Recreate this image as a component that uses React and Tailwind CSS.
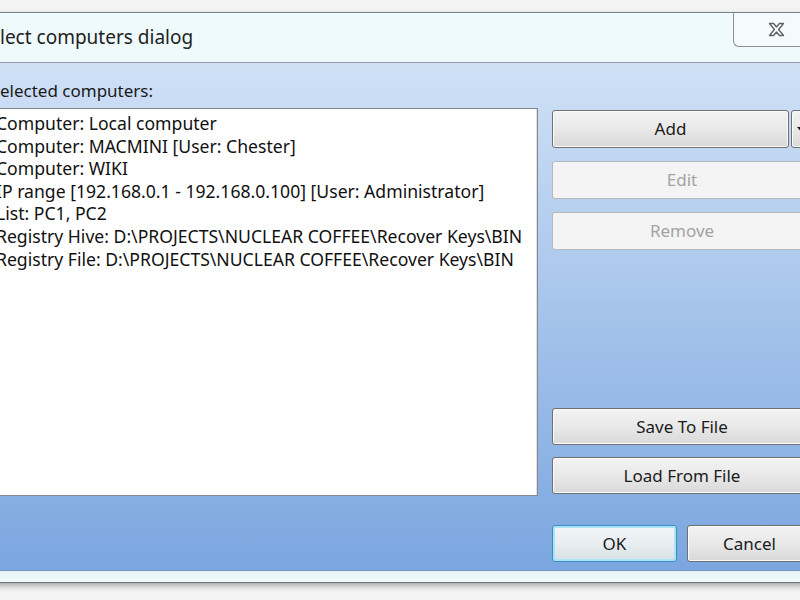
import React from "react";

const entries = [
  "Computer: Local computer",
  "Computer: MACMINI [User: Chester]",
  "Computer: WIKI",
  "IP range [192.168.0.1 - 192.168.0.100] [User: Administrator]",
  "List: PC1, PC2",
  "Registry Hive: D:\\PROJECTS\\NUCLEAR COFFEE\\Recover Keys\\BIN",
  "Registry File: D:\\PROJECTS\\NUCLEAR COFFEE\\Recover Keys\\BIN",
];

function WinButton({ children, disabled, focused, className = "" }) {
  let look =
    "border-[#707070] bg-gradient-to-b from-[#f3f3f3] via-[#e9e9e9] to-[#d9d9d9] text-[#1b1b1b] shadow-[inset_0_0_0_1px_#fbfbfb]";
  if (disabled) {
    look = "border-[#b5b9bc] bg-[#f4f4f4] text-[#a3a3a3]";
  }
  if (focused) {
    look =
      "border-[#3c8ec2] bg-gradient-to-b from-[#f1f6f8] via-[#e8eef1] to-[#d8e0e4] text-[#1b1b1b] shadow-[inset_0_0_0_2px_#a9e4f7]";
  }
  return (
    <div
      className={`flex items-center justify-center rounded-[3px] border ${look} ${className}`}
    >
      {children}
    </div>
  );
}

export default function App() {
  return (
    <div
      className="h-[600px] w-[800px] overflow-hidden bg-[#f4f4f4] pt-[12px] text-[17px]"
      style={{ fontFamily: '"Noto Sans", "Open Sans", sans-serif' }}
    >
      <div className="-ml-[10px] w-[830px] border-t border-b border-t-[#7b8085] border-b-[#6f7479] shadow-[0_3px_6px_rgba(0,0,0,0.3)]">
        {/* title bar */}
        <div className="flex h-[50px] border-b border-[#8f9aa5] bg-[#eefafc]">
          <div className="flex items-center pl-[10px] pb-[1px] text-[19px] text-[#222]">
            lect computers dialog
          </div>
          <div className="ml-auto mr-[17px] flex h-[34px] w-[70px] items-center justify-start rounded-bl-[6px] border-b border-l border-[#8c9196] bg-[#f5fbfc] pl-[34px]">
            <svg width="17" height="15" viewBox="0 0 17 15">
              <path
                d="M1.5 1.5 H5.6 L8.5 5 L11.4 1.5 H15.5 L10.6 7.5 L15.5 13.5 H11.4 L8.5 10 L5.6 13.5 H1.5 L6.4 7.5 Z"
                fill="#ffffff"
                stroke="#5d6166"
                strokeWidth="1.4"
                strokeLinejoin="round"
              />
            </svg>
          </div>
        </div>

        {/* body */}
        <div className="flex h-[507px] flex-col bg-gradient-to-b from-[#d0e1f6] to-[#7ba6df] pl-[2px] pt-[16px]">
          <div className="flex items-start gap-[14px]">
            <div className="flex w-[546px] flex-col">
              <div className="h-[24px] pl-[8px] leading-[24px] text-[#1a1a1a]">
                elected computers:
              </div>
              <div className="mt-[5px] h-[388px] overflow-hidden border border-[#828790] bg-white pl-[3px] pt-[3px] text-[17.6px] shadow-[inset_-1px_0_0_#e3e3e3]">
                {entries.map((e) => (
                  <div
                    key={e}
                    className="whitespace-nowrap leading-[22.6px] text-[#111]"
                  >
                    {e}
                  </div>
                ))}
              </div>
            </div>

            <div className="mt-[31px] flex w-[260px] flex-col">
              <div className="flex h-[38px] gap-[2px]">
                <WinButton className="w-[237px]">Add</WinButton>
                <WinButton className="flex-1 !justify-start pl-[5px]">
                  <svg width="7" height="4" viewBox="0 0 7 4">
                    <path d="M0 0 H7 L3.5 4 Z" fill="#111" />
                  </svg>
                </WinButton>
              </div>
              <WinButton disabled className="mt-[13px] h-[38px]">
                Edit
              </WinButton>
              <WinButton disabled className="mt-[13px] h-[38px]">
                Remove
              </WinButton>
              <WinButton className="mt-[158px] h-[37px]">Save To File</WinButton>
              <WinButton className="mt-[12px] h-[37px]">Load From File</WinButton>
            </div>
          </div>

          <div className="mt-[29px] flex justify-end gap-[10px] pr-[8px]">
            <WinButton focused className="h-[37px] w-[125px]">
              OK
            </WinButton>
            <WinButton className="h-[37px] w-[125px]">Cancel</WinButton>
          </div>
        </div>

        {/* bottom frame */}
        <div className="h-[12px] border-t border-[#7295c6] bg-gradient-to-b from-[#e8f4f6] to-[#f2fafa]" />
      </div>
    </div>
  );
}
